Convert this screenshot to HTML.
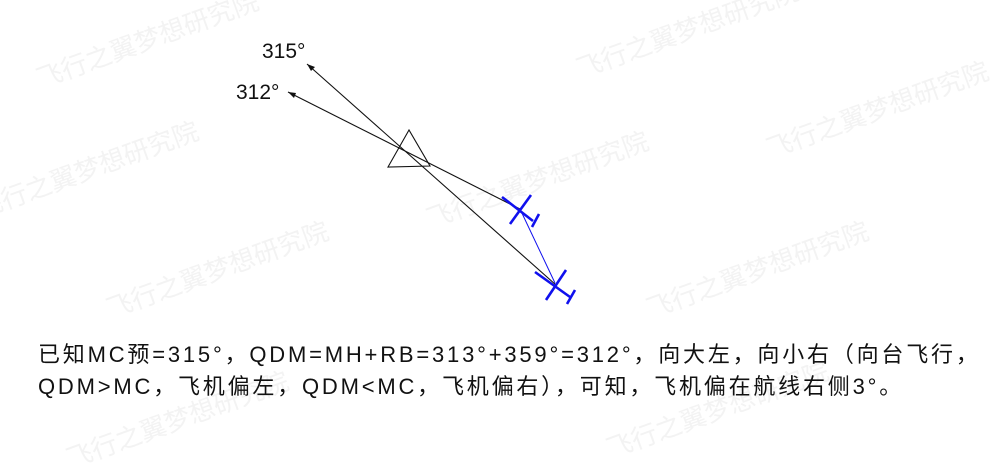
<!DOCTYPE html>
<html><head><meta charset="utf-8"><style>
body{margin:0;background:#fff;width:999px;height:444px;overflow:hidden;position:relative;font-family:"Liberation Sans","Noto Sans CJK SC",sans-serif}
.t{position:absolute;left:38px;font-size:22px;color:#111;white-space:nowrap;letter-spacing:2.8px}
.w{position:absolute;color:#f3f3f3;font-size:26px;transform:rotate(-20deg);white-space:nowrap;font-family:"Noto Sans CJK SC",sans-serif}
</style></head><body>
<div class="w" style="left:30px;top:20px">飞行之翼梦想研究院</div>
<div class="w" style="left:570px;top:10px">飞行之翼梦想研究院</div>
<div class="w" style="left:760px;top:90px">飞行之翼梦想研究院</div>
<div class="w" style="left:-30px;top:150px">飞行之翼梦想研究院</div>
<div class="w" style="left:420px;top:160px">飞行之翼梦想研究院</div>
<div class="w" style="left:100px;top:250px">飞行之翼梦想研究院</div>
<div class="w" style="left:640px;top:250px">飞行之翼梦想研究院</div>
<div class="w" style="left:60px;top:400px">飞行之翼梦想研究院</div>
<div class="w" style="left:600px;top:390px">飞行之翼梦想研究院</div>
<svg width="999" height="444" style="position:absolute;left:0;top:0">
<g stroke="#111" stroke-width="1.1" fill="none">
<line x1="307" y1="64" x2="556" y2="285"/>
<line x1="288" y1="92" x2="520" y2="209"/>
<polygon points="409,130 388,167 430,166"/>
</g>
<polygon points="307,64 315,67 311,71" fill="#111"/>
<polygon points="288,92 296,93 294,98" fill="#111"/>
<g stroke="#1010ee" stroke-width="2.6" fill="none">
<line x1="502" y1="197" x2="533" y2="221"/>
<line x1="531" y1="195" x2="510" y2="224"/>
<line x1="539" y1="214" x2="532" y2="227"/>
<line x1="535" y1="272" x2="570" y2="297"/>
<line x1="566" y1="270" x2="546" y2="300"/>
<line x1="575" y1="290" x2="567" y2="304"/>
</g>
<line x1="520" y1="209" x2="555" y2="283" stroke="#1010ee" stroke-width="1"/>
<text x="262" y="58" font-family="Liberation Sans, sans-serif" font-size="21" fill="#111">315°</text>
<text x="236" y="99" font-family="Liberation Sans, sans-serif" font-size="21" fill="#111">312°</text>
</svg>
<div class="t" style="top:337px">已知MC预=315°，QDM=MH+RB=313°+359°=312°，向大左，向小右（向台飞行，</div>
<div class="t" style="top:369px">QDM&gt;MC，飞机偏左，QDM&lt;MC，飞机偏右），可知，飞机偏在航线右侧3°。</div>
</body></html>
